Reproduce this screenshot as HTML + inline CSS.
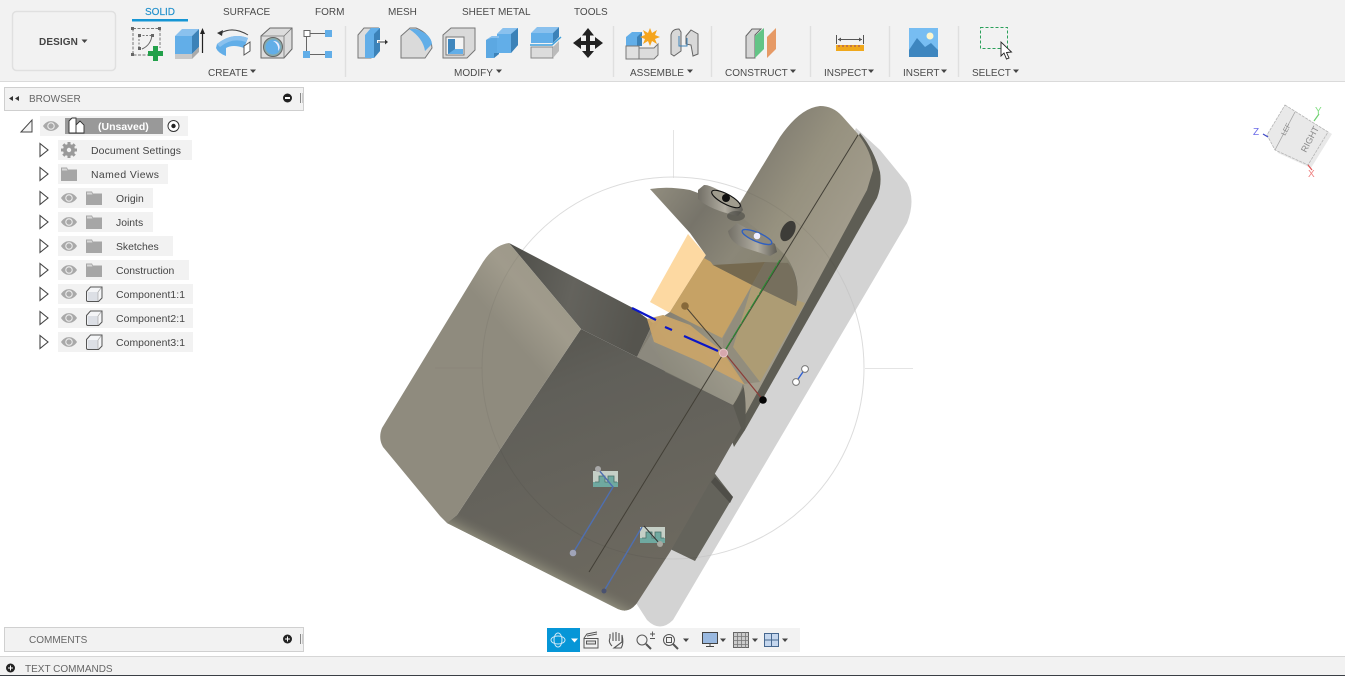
<!DOCTYPE html>
<html><head><meta charset="utf-8"><style>
html,body{margin:0;padding:0;width:1345px;height:676px;overflow:hidden;background:#fff}
svg{display:block;font-family:"Liberation Sans",sans-serif}
.tb{font-size:10px;fill:#4a4a4a}
.tr{font-size:10.4px;fill:#444}
</style></head><body>
<svg width="1345" height="676" viewBox="0 0 1345 676" xmlns="http://www.w3.org/2000/svg">
<defs>
<linearGradient id="gLight" gradientUnits="userSpaceOnUse" x1="548" y1="284" x2="500" y2="325"><stop offset="0" stop-color="#9e998a"/><stop offset=".35" stop-color="#a09b8c"/><stop offset="1" stop-color="#8f8b7e"/></linearGradient>
<linearGradient id="gTopDark" x1="0" y1="0" x2="1" y2="0.2"><stop offset="0" stop-color="#4d4d48"/><stop offset=".5" stop-color="#64635d"/><stop offset="1" stop-color="#55544e"/></linearGradient>
<linearGradient id="gDark" x1="0.2" y1="0" x2="0.6" y2="1"><stop offset="0" stop-color="#55544e"/><stop offset=".25" stop-color="#605f59"/><stop offset="1" stop-color="#6e6a60"/></linearGradient>
<linearGradient id="gRim" gradientUnits="userSpaceOnUse" x1="541" y1="553" x2="534" y2="567"><stop offset="0" stop-color="#6b6960" stop-opacity="0"/><stop offset="1" stop-color="#8a8878"/></linearGradient>
<linearGradient id="gPlate" gradientUnits="userSpaceOnUse" x1="760" y1="150" x2="860" y2="210"><stop offset="0" stop-color="#827e72"/><stop offset=".45" stop-color="#96917f"/><stop offset="1" stop-color="#a29c8c"/></linearGradient>
<linearGradient id="gDisc" gradientUnits="userSpaceOnUse" x1="655" y1="190" x2="790" y2="290"><stop offset="0" stop-color="#8f8b7d"/><stop offset=".3" stop-color="#77746a"/><stop offset=".6" stop-color="#8b8778"/><stop offset=".88" stop-color="#86826f"/><stop offset="1" stop-color="#65635a"/></linearGradient>
<linearGradient id="gBoss" x1="0" y1="0" x2="1" y2="0"><stop offset="0" stop-color="#726f66"/><stop offset=".6" stop-color="#b2aea2"/><stop offset="1" stop-color="#5e5c55"/></linearGradient>
<linearGradient id="gCyl" gradientUnits="userSpaceOnUse" x1="660" y1="360" x2="700" y2="330"><stop offset="0" stop-color="#8c897e"/><stop offset="1" stop-color="#a9a598"/></linearGradient>
<g id="eye"><path d="M-8,0 C-4,-6.500 4,-6.500 8,0 C4,6.500 -4,6.500 -8,0Z" fill="#a9a9a9"/><circle r="3.200" fill="none" stroke="#ececec" stroke-width="1.100"/></g>
<g id="tri"><path d="M-4,-6.500 L4,0 L-4,6.500Z" fill="#fff" stroke="#444" stroke-width="1.100"/></g>
<g id="fold"><path d="M0,-6.500 h6 l1,2 h9 v11.500 h-16z" fill="#a6a6a6"/><path d="M1,-5.500 h4.500 l1,2 h-5.500z" fill="#d8d8d8"/></g>
<g id="comp"><path d="M0,-2.500 L4,-7 H15.500 V4 L12,7.500 H1.500 Q0,7.500 0,6 Z" fill="#f4f5f7" stroke="#555"/><path d="M1,-2 H11.500 V7 H1.500Z" fill="#dcdfe5"/><path d="M11.500,-2 L15,-6.500 M11.500,-2 V7" stroke="#aaa" stroke-width=".7" fill="none"/></g>
</defs>

<!-- ground -->
<rect width="1345" height="676" fill="#fff"/>
<circle cx="673" cy="368" r="191" fill="none" stroke="#e8e8e8" stroke-width="1"/>
<path d="M673.500,130V178M865,368.500H913M673.500,560V610" stroke="#e4e4e4" fill="none"/>

<!-- shadow -->
<path d="M856,128 L880,150 L907,183 Q916,200 907,223 L673,620 Q660,633 647,620 L636,603 L740,420Z" fill="#d3d3d3"/>
<!-- side block -->
<path d="M712,470 L733,497 L695,561 L668,548Z" fill="#64635b"/>
<path d="M715,477 L733,497 L730,503 L711,482Z" fill="#4f4e48"/>

<!-- plate band -->
<path d="M860,133 Q874,150 880,172 Q882,185 877,198 L745,430 L734,447 L725,420 Z" fill="#5e5d54"/>
<!-- orange on white -->
<path d="M688,234 L706,255 L670,313 L650,302Z" fill="#fdd9a2"/>
<!-- plate -->
<path d="M740,203 L780,137 Q800,108 820,106 Q833,106 842,116 L858,134 Q872,152 873,170 L867,190 L737,430 L733,405 L637,357 L653,323 L670,312 L704,258Z" fill="url(#gPlate)"/>
<path d="M752,285 L805,303 L760,382 L733,347Z" fill="#ad9c74"/>
<path d="M723,338 L752,285 L733,347 L760,382 L743,384 L723,355Z" fill="#928d7d"/>
<!-- body top dark -->
<path d="M509,243 L581,329 L637,357 L653,323 L633,308Z" fill="url(#gTopDark)"/>
<!-- cylinder -->
<path d="M637,357 L663,315 Q690,325 712,352 Q735,375 743,384 L733,405Z" fill="url(#gCyl)"/>
<path d="M733,405 Q740,395 743,384 Q747,400 745,430 L735,440Z" fill="#5a5951"/>
<!-- dark body -->
<path d="M581,329 L733,405 L741,428 L670,552 L637,603 Q629,614 618,609 L447,523 L457,515 L513,430Z" fill="url(#gDark)"/>
<path d="M447,523 L456,511 L645,592 L637,603 Q629,614 618,609Z" fill="url(#gRim)"/>
<!-- light left face -->
<path d="M509,243 Q494,245 483,262 L382,428 Q378,438 383,447 L440,516 L447,523 L457,515 L513,430 L581,329Z" fill="url(#gLight)"/>
<path d="M435,368H482" fill="none" stroke="#7d796c" stroke-width=".8" opacity=".35"/>
<!-- orange body overlaps -->
<path d="M704,258 L752,285 L722,338 L670,312Z" fill="#c6a265"/>
<path d="M647,319 L663,315 L690,325 L723,352 L745,385 L700,362 L654,342Z" fill="#c8a368" opacity=".95"/>
<path d="M654,342 L700,362 L745,385 L733,405 L665,372Z" fill="#8f8b7d" opacity=".45"/>
<!-- half disc -->
<path d="M650,189 Q668,186 690,190 Q735,205 785,255 Q802,278 796,306 L752,285 L713,265 L690,233Z" fill="url(#gDisc)"/>
<path d="M713,265 L765,262 L752,285Z" fill="#75694f"/>
<path d="M765,262 L788,263 Q801,280 796,306 L752,285Z" fill="#766f5d"/>
<!-- bosses -->
<path d="M698,190 L704,185 Q712,184 741,204 L743,210 L738,216 Q710,210 698,199Z" fill="url(#gBoss)"/>
<ellipse cx="726" cy="199" rx="16" ry="5" transform="rotate(28 726 199)" fill="#a09c8e" stroke="#111" stroke-width="1.100"/>
<circle cx="726" cy="198" r="4" fill="#111"/>
<path d="M728,231 L737,223 L775,244 L777,252 L770,256 L745,248 Q730,243 728,231Z" fill="url(#gBoss)"/>
<ellipse cx="757" cy="237" rx="16" ry="4.500" transform="rotate(23 757 237)" fill="#8e8a7d" stroke="#2f5fc0" stroke-width="1.400"/>
<circle cx="757" cy="236" r="3.300" fill="#eef"/>
<ellipse cx="788" cy="231" rx="6.500" ry="11" transform="rotate(28 788 231)" fill="#3d3c38"/>
<ellipse cx="736" cy="216" rx="9" ry="5" fill="#4a4944" opacity=".6"/>
<!-- faint circle through model -->
<circle cx="673" cy="368" r="191" fill="none" stroke="#000" stroke-opacity=".05" stroke-width="1"/>
<!-- center line -->
<path d="M858,135 L589,572" stroke="#423f36" stroke-width="1"/>
<!-- axes -->
<path d="M724,352 L780,260" stroke="#2f8a35" stroke-width="1.200" stroke-dasharray="16 1"/>
<path d="M724,352 L763,400" stroke="#8c3d38" stroke-width="1.200"/>
<path d="M724,352 L685,306" stroke="#4e4536" stroke-width="1"/>
<circle cx="685" cy="306" r="3.800" fill="#87693a"/>
<path d="M632,308 L656,320 M665,327 L672,330 M684,336 L718,351" stroke="#0b16c8" stroke-width="2.200"/>
<circle cx="723.500" cy="353" r="4" fill="#d6a7ad" stroke="#e8c6ca"/>
<circle cx="763" cy="400" r="3.800" fill="#050505"/>
<!-- sketch bit on shadow -->
<path d="M796,382 L805,369" stroke="#2f5fd0" stroke-width="1.400"/>
<circle cx="796" cy="382" r="3.400" fill="#fff" stroke="#777"/><circle cx="805" cy="369" r="3.400" fill="#fff" stroke="#777"/>
<!-- constraint boxes -->
<rect x="593" y="471" width="25" height="15.500" fill="#c5cfc6"/><rect x="593" y="482" width="25" height="5" fill="#6fa9a0"/>
<path d="M595,482 H599 V476 H605 V482 H608 V476 H614 V482 H617" fill="#6fa9a0" stroke="#4a6e66" stroke-width=".8"/>
<rect x="640" y="527" width="25" height="15.500" fill="#c5cfc6"/><rect x="640" y="538" width="25" height="5" fill="#6fa9a0"/>
<path d="M642,538 H646 V532 H652 V538 H655 V532 H661 V538 H664" fill="#6fa9a0" stroke="#4a6e66" stroke-width=".8"/>
<path d="M573,553 L613,487 L598,469" fill="none" stroke="#4f6fb0" stroke-width="1.400"/>
<path d="M604,591 L642,527" fill="none" stroke="#4f6fb0" stroke-width="1.400"/>
<path d="M644,526 L660,544" fill="none" stroke="#333" stroke-width="1"/>
<circle cx="573" cy="553" r="3.300" fill="#a0a4b8"/><circle cx="598" cy="469" r="3" fill="#a8a8a8"/><circle cx="604" cy="591" r="2.500" fill="#4a5270"/><circle cx="660" cy="544" r="3" fill="#a8a8a0"/>

<!-- viewcube -->
<path d="M1288,108 L1332,134 L1311,168 L1278,153 L1270,138Z" fill="#cfcfcf" opacity=".45"/>
<path d="M1285,105 L1328,132 L1308,165 L1275,150 L1267,135Z" fill="#e9e9e9" stroke="#b5b5b5" stroke-width=".8" stroke-dasharray="3 1"/>
<path d="M1295,112 L1275,150" stroke="#a5a5a5" stroke-width=".8"/>
<text x="0" y="0" transform="translate(1306,153) rotate(-62)" font-size="9" fill="#8a8a8a">RIGHT</text>
<text x="0" y="0" transform="translate(1285,136) rotate(-62)" font-size="7" fill="#8a8a8a">LEF</text>
<path d="M1263,134 L1268,137" stroke="#3e48c8" stroke-width="1.200"/><path d="M1314,121 L1319,114" stroke="#6fcf70" stroke-width="1.200"/><path d="M1308,165 L1312,170" stroke="#e05555" stroke-width="1.200"/>
<text x="1253" y="135" font-size="10" fill="#6a6ae8">Z</text>
<text x="1315" y="114" font-size="10" fill="#80dd80">Y</text>
<text x="1308" y="177" font-size="10" fill="#ee8080">X</text>

<!-- toolbar -->
<rect width="1345" height="81" fill="#f2f2f2"/><rect y="81" width="1345" height="1" fill="#dadada"/>
<rect x="12.500" y="11.500" width="103" height="59" rx="4" fill="#f2f2f2" stroke="#e0e0e0" stroke-width="1.500"/>
<text x="39" y="45" font-size="10" font-weight="bold" fill="#444" letter-spacing=".1">DESIGN</text><path d="M81.500,39.500h6l-3,3.500z" fill="#444"/>
<text x="145" y="15" font-size="10" fill="#1f8fcb" stroke="#1f8fcb" stroke-width=".15">SOLID</text><rect x="132" y="19" width="56" height="2.500" fill="#1696d4"/>
<text x="223" y="15" class="tb">SURFACE</text><text x="315" y="15" class="tb">FORM</text><text x="388" y="15" class="tb">MESH</text><text x="462" y="15" class="tb">SHEET METAL</text><text x="574" y="15" class="tb">TOOLS</text>
<text x="208" y="76" class="tb">CREATE</text><path d="M250,69.500h6l-3,3.500z" fill="#444"/>
<text x="454" y="76" class="tb">MODIFY</text><path d="M496,69.500h6l-3,3.500z" fill="#444"/>
<text x="630" y="76" class="tb">ASSEMBLE</text><path d="M687,69.500h6l-3,3.500z" fill="#444"/>
<text x="725" y="76" class="tb">CONSTRUCT</text><path d="M790,69.500h6l-3,3.500z" fill="#444"/>
<text x="824" y="76" class="tb">INSPECT</text><path d="M868,69.500h6l-3,3.500z" fill="#444"/>
<text x="903" y="76" class="tb">INSERT</text><path d="M941,69.500h6l-3,3.500z" fill="#444"/>
<text x="972" y="76" class="tb">SELECT</text><path d="M1013,69.500h6l-3,3.500z" fill="#444"/>
<path d="M345.500,26V77M613.500,26V77M711.500,26V77M810.500,26V77M889.500,26V77M958.500,26V77" stroke="#dfdfdf" stroke-width="1.500"/>

<!-- sketch icon -->
<path d="M133,28.500H160V48M133,28.500V55H150" fill="none" stroke="#777" stroke-dasharray="3 1.500"/>
<g fill="#666"><rect x="131" y="27" width="3" height="3"/><rect x="158" y="27" width="3" height="3"/><rect x="131" y="53" width="3" height="3"/></g>
<path d="M139,35.500 H152 M139,35.500 V49" stroke="#777" stroke-dasharray="2 1.500" fill="none"/><path d="M152,35 Q151,45 142,49" fill="none" stroke="#666"/>
<g fill="#666"><rect x="138" y="34" width="3" height="3"/><rect x="151" y="34" width="3" height="3"/><rect x="138" y="47" width="3" height="3"/></g>
<path d="M153,46h5v5h5v5h-5v5h-5v-5h-5v-5h5z" fill="#22a04a"/>
<!-- extrude -->
<path d="M175,36 L182,29 H199 L192,36Z" fill="#8ac1ee"/><path d="M175,36H192V54H175Z" fill="#62aee8"/><path d="M192,36 L199,29V47L192,54Z" fill="#3c82b8"/><path d="M175,54H192V59H175Z" fill="#c8c8c8"/><path d="M192,54 L199,47V52L192,59Z" fill="#aaa"/>
<path d="M202.500,53V33" stroke="#222" stroke-width="1.200"/><path d="M200,34 L202.500,28 L205,34Z" fill="#222"/>
<!-- revolve -->
<path d="M217,44 Q232,32 248,38 L244,48 Q233,44 226,48 V56 Q218,53 216,48Z" fill="#62aee8"/><path d="M217,44 Q232,32 248,38 L246,42 Q232,37 220,47Z" fill="#8ac1ee"/>
<path d="M244,46 L250,42 V51 L244,55Z" fill="#fff" stroke="#555"/><path d="M221,33 Q233,26 248,35" fill="none" stroke="#444"/><path d="M217,33 L223,30 L222,36Z" fill="#333"/>
<!-- hole -->
<path d="M261,36 L270,28 H292 V49 L284,58 H261Z" fill="#dcdcdc" stroke="#666"/><path d="M261,36H284V58M284,36L292,28" fill="none" stroke="#777" stroke-width=".8"/>
<circle cx="273" cy="47" r="9.500" fill="#8aa" stroke="#666"/><circle cx="273" cy="47" r="7.500" fill="#62aee8"/><path d="M273,41 A6,6 0 0 1 278,51 A9,9 0 0 0 273,41Z" fill="#eef"/>
<!-- pattern -->
<rect x="304" y="30.500" width="6" height="6" fill="#fff" stroke="#666"/><rect x="325" y="30" width="7" height="7" fill="#62aee8"/><rect x="303" y="51" width="7" height="7" fill="#62aee8"/><rect x="325" y="51" width="7" height="7" fill="#62aee8"/>
<path d="M310,33.500H325M306.500,37V51M310,54.500H325" stroke="#666"/>
<!-- press pull -->
<path d="M358,35 L364,28 H378 L371,35V58H358Z" fill="#ddd" stroke="#777"/><path d="M365,35 L371,28 H380 V51 L374,58H365Z" fill="#62aee8"/><path d="M374,34 L380,28V51L374,58Z" fill="#3c82b8"/>
<rect x="377" y="40" width="9" height="3" fill="#fff"/><path d="M378,42H386" stroke="#333"/><path d="M385,39.500 L388,42 L385,44.500Z" fill="#333"/>
<!-- fillet -->
<path d="M401,36 L410,28 H416 Q431,34 432,48 L425,58 H401Z" fill="#dadada" stroke="#777"/><path d="M409,29 H416 Q431,34 432,44 L425,51 Q423,38 409,29Z" fill="#62aee8"/>
<!-- shell -->
<path d="M443,35 L451,28 H475 V50 L467,58 H443Z" fill="#d9d9d9" stroke="#777"/><rect x="446" y="37" width="18" height="18" fill="#f4f4f4" stroke="#777"/><path d="M448,39h7v10h8v5h-15z" fill="#3f86bd"/><path d="M455,49h8v5h-15z" fill="#62aee8"/>
<!-- combine -->
<path d="M486,40 L492,36 H499 V54 L494,58 H486Z" fill="#5ca8e2"/><path d="M497,34 L503,28 H518 V45 L511,53 H497Z" fill="#62aee8"/><path d="M497,34 L503,28 H518 L511,34Z" fill="#8ac1ee"/><path d="M511,34 L518,28V45L511,53Z" fill="#3c82b8"/><path d="M486,40 L492,36 H499 V38 H491Z" fill="#8ac1ee"/><path d="M499,53V54L494,58V53Z" fill="#3c82b8"/>
<!-- split -->
<path d="M531,33 L537,27 H559 L553,33Z" fill="#8ac1ee"/><path d="M531,33H553V43H531Z" fill="#62aee8"/><path d="M553,33 L559,27V37L553,43Z" fill="#3c82b8"/>
<path d="M530,45 H552 L561,37" stroke="#3ea0dc" fill="none" stroke-width="1.500"/>
<path d="M531,47H553V58H531Z" fill="#dcdcdc" stroke="#888"/><path d="M553,47 L559,41V51L553,58Z" fill="#bbb"/>
<!-- move -->
<path d="M588,28 L594,35.500 H590 V41 H595 V37 L603,43 L595,49 V45 H590 V51 H594 L588,58 L582,51 H586 V45 H581 V49 L573,43 L581,37 V41 H586 V35.500 H582Z" fill="#222"/>
<!-- assemble -->
<path d="M626,37 L632,32 H642 V46 H626Z" fill="#62aee8"/><path d="M637,37 L642,32V46L637,46Z" fill="#3c82b8"/>
<path d="M626,46H639V59H626Z" fill="#e0e0e0" stroke="#777"/><path d="M639,48 H654 L658,44 V55 L654,59 H639Z" fill="#dcdcdc" stroke="#777"/>
<path d="M650,28 L652,33 L657,30 L655,35 L660,37 L655,39 L657,44 L652,41 L650,46 L648,41 L643,44 L645,39 L640,37 L645,35 L643,30 L648,33Z" fill="#f5a51d"/>
<!-- joint -->
<path d="M671,35 Q672,29 679,29 L681,32 V51 L674,56 L671,54Z" fill="#d8d8d8" stroke="#666"/><path d="M686,36 L691,30 L698,34 V54 L693,56 L691,45 L686,44Z" fill="#d8d8d8" stroke="#666"/>
<path d="M679,36V46H687V38" stroke="#3c82b8" fill="none"/>
<!-- construct -->
<path d="M746,36 L752,29 H761 L755,35 V58 H746Z" fill="#d5d5d5" stroke="#666"/><path d="M755,36 L764,28 V49 L755,58Z" fill="#63c486"/><path d="M767,37 L776,28 V49 L767,58Z" fill="#e69a66"/>
<!-- inspect -->
<rect x="836" y="45" width="28" height="6" fill="#f0a81c"/><path d="M839,45v2M843,45v2M847,45v2M851,45v2M855,45v2M859,45v2" stroke="#946"/><path d="M836.500,35V44M863.500,35V44M838,39.500H862" stroke="#555"/><path d="M838,39.500l3,-2v4zM862,39.500l-3,-2v4z" fill="#555"/>
<!-- insert -->
<rect x="909" y="28" width="29" height="29" fill="#77bdf2"/><path d="M909,50 L917,38 L925,47 L931,43 L938,50 V57 H909Z" fill="#3e86bf"/><circle cx="930" cy="36" r="3.500" fill="#fdf6cc"/>
<!-- select -->
<rect x="980.500" y="27.500" width="27" height="21" fill="none" stroke="#2aa05a" stroke-dasharray="3 2"/>
<path d="M1001,42 V56 L1004,53 L1006.500,59 L1009,58 L1006.500,52.500 L1011.500,52Z" fill="#fff" stroke="#222" stroke-width=".9"/>

<!-- browser -->
<rect x="4.500" y="87.500" width="299" height="23" fill="#f2f2f2" stroke="#cfcfcf"/>
<path d="M9,98.500 L13,96 V101Z M15,98.500 L19,96 V101Z" fill="#333"/>
<text x="29" y="102" font-size="10" fill="#666">BROWSER</text>
<circle cx="287.500" cy="98" r="4.500" fill="#222"/><rect x="285" y="97" width="5" height="2" fill="#fff"/>
<path d="M300.500,93V103" stroke="#888"/><path d="M302.500,93V103" stroke="#ccc"/>

<rect x="40" y="116" width="148" height="20" fill="#f2f2f2"/><rect x="65" y="118" width="98" height="16" fill="#999"/>
<path d="M21,132 L32,120 V132Z" fill="#f4f4f4" stroke="#444"/>
<use href="#eye" x="51" y="126"/>
<path d="M69,121 L72,118 H76 V133 H69Z M76,125 L80,121 L84,125 V133 H76Z" fill="#fff" stroke="#333" stroke-width=".9"/>
<text x="98" y="130" font-size="10.500" font-weight="bold" fill="#fff">(Unsaved)</text>
<circle cx="173.500" cy="126" r="5.500" fill="#fff" stroke="#333"/><circle cx="173.500" cy="126" r="2.200" fill="#222"/>

<rect x="58" y="140" width="134" height="20" fill="#f2f2f2"/><rect x="58" y="164" width="110" height="20" fill="#f2f2f2"/><rect x="58" y="188" width="95" height="20" fill="#f2f2f2"/><rect x="58" y="212" width="95" height="20" fill="#f2f2f2"/><rect x="58" y="236" width="115" height="20" fill="#f2f2f2"/><rect x="58" y="260" width="131" height="20" fill="#f2f2f2"/><rect x="58" y="284" width="135" height="20" fill="#f2f2f2"/><rect x="58" y="308" width="135" height="20" fill="#f2f2f2"/><rect x="58" y="332" width="135" height="20" fill="#f2f2f2"/>

<use href="#tri" x="44" y="150"/><use href="#tri" x="44" y="174"/><use href="#tri" x="44" y="198"/><use href="#tri" x="44" y="222"/><use href="#tri" x="44" y="246"/><use href="#tri" x="44" y="270"/><use href="#tri" x="44" y="294"/><use href="#tri" x="44" y="318"/><use href="#tri" x="44" y="342"/>

<!-- gear -->
<circle cx="69" cy="150" r="6" fill="#9a9a9a"/><path d="M69,142V158M61,150H77M63.300,144.300L74.700,155.700M74.700,144.300L63.300,155.700" stroke="#9a9a9a" stroke-width="3"/><circle cx="69" cy="150" r="2.200" fill="#f2f2f2"/>
<use href="#fold" x="61" y="174"/>
<use href="#eye" x="69" y="198"/><use href="#eye" x="69" y="222"/><use href="#eye" x="69" y="246"/><use href="#eye" x="69" y="270"/><use href="#eye" x="69" y="294"/><use href="#eye" x="69" y="318"/><use href="#eye" x="69" y="342"/>
<use href="#fold" x="86" y="198"/><use href="#fold" x="86" y="222"/><use href="#fold" x="86" y="246"/><use href="#fold" x="86" y="270"/>
<use href="#comp" x="86.500" y="294"/><use href="#comp" x="86.500" y="318"/><use href="#comp" x="86.500" y="342"/>

<text x="91" y="154" class="tr" textLength="90">Document Settings</text>
<text x="91" y="178" class="tr" textLength="68">Named Views</text>
<text x="116" y="202" class="tr">Origin</text>
<text x="116" y="226" class="tr">Joints</text>
<text x="116" y="250" class="tr">Sketches</text>
<text x="116" y="274" class="tr">Construction</text>
<text x="116" y="298" class="tr" textLength="69">Component1:1</text>
<text x="116" y="322" class="tr" textLength="69">Component2:1</text>
<text x="116" y="346" class="tr" textLength="69">Component3:1</text>

<!-- comments -->
<rect x="4.500" y="627.500" width="299" height="24" fill="#f2f2f2" stroke="#d0d0d0"/>
<text x="29" y="643" font-size="10" fill="#666">COMMENTS</text>
<circle cx="287.500" cy="639" r="4.500" fill="#222"/><path d="M285,639h5M287.500,636.500v5" stroke="#fff"/>
<path d="M300.500,634V644" stroke="#888"/><path d="M302.500,634V644" stroke="#ccc"/>

<!-- bottom bar -->
<rect x="0" y="656" width="1345" height="20" fill="#f2f2f2"/><rect x="0" y="656" width="1345" height="1" fill="#d6d6d6"/><rect x="0" y="675" width="1345" height="1" fill="#3a3f45"/>
<circle cx="10.500" cy="668" r="4.500" fill="#222"/><path d="M8,668h5M10.500,665.500v5" stroke="#fff"/>
<text x="25" y="672" font-size="10" fill="#666">TEXT COMMANDS</text>

<!-- nav -->
<rect x="547" y="628" width="253" height="24" fill="#f2f2f2"/><rect x="547" y="628" width="33" height="24" fill="#0696d7"/>
<g fill="none" stroke="#cfe9f7"><ellipse cx="558" cy="640" rx="7" ry="4"/><ellipse cx="558" cy="640" rx="4" ry="7"/></g><path d="M571,638.500h7l-3.500,4z" fill="#fff"/>
<g fill="none" stroke="#555"><rect x="584" y="638.500" width="14" height="9.500"/><rect x="586.500" y="641" width="9" height="3" fill="#ddd"/><path d="M584,638 L587,634 L597,632 M587,636 L597,634"/>
<path d="M612,646 Q608,642 610,638 V634 M613,641V632.500 M616,641V632 M619,641V633 M622,642V635 Q624,644 621,648 H614Z" stroke-width="1.100"/>
<circle cx="642" cy="640" r="5"/><path d="M646,644 L651,649" stroke-width="2"/><path d="M650,634h5M652.500,631.500v5M650,638.500h5" stroke-width=".9"/>
<circle cx="669" cy="640" r="5.500"/><rect x="666.500" y="637.500" width="5" height="5"/><path d="M673,644 L678,649" stroke-width="2"/></g>
<path d="M683,638.500h6l-3,3.500z" fill="#444"/>
<rect x="702.500" y="632.500" width="15" height="11" fill="#9ab9e0" stroke="#444"/><path d="M706,646.500h8M710,644v2" stroke="#444"/><path d="M720,638.500h6l-3,3.500z" fill="#444"/>
<rect x="733.500" y="632.500" width="15" height="15" fill="#ccc" stroke="#666"/><path d="M737.500,632v16M741.500,632v16M745.500,632v16M733,636.500h16M733,640.500h16M733,644.500h16" stroke="#777" stroke-width=".8"/><path d="M752,638.500h6l-3,3.500z" fill="#444"/>
<rect x="764.500" y="633.500" width="14" height="13" fill="#c5d7ee" stroke="#47688f"/><path d="M771.500,633v14M764,640h15" stroke="#47688f"/><path d="M782,638.500h6l-3,3.500z" fill="#444"/>
</svg>
</body></html>
